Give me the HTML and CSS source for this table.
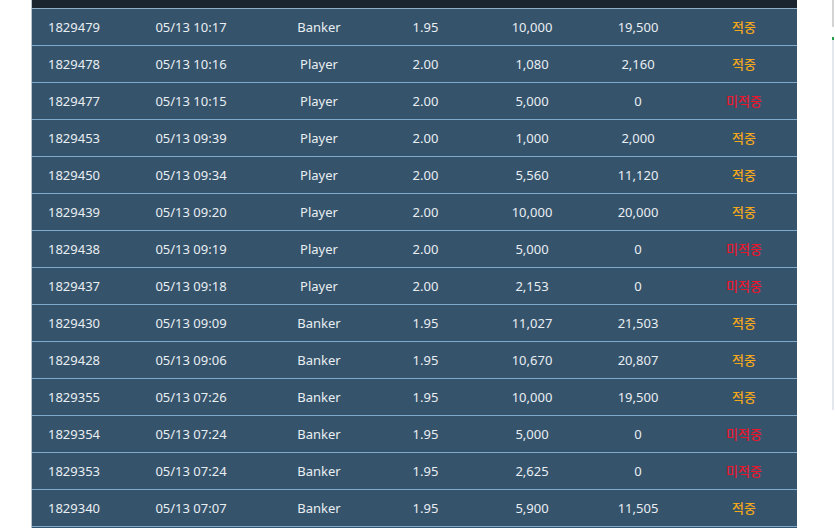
FILE: index.html
```html
<!DOCTYPE html>
<html lang="ko">
<head>
<meta charset="utf-8">
<title>Bet history</title>
<link rel="stylesheet" href="styles.css">
</head>
<body>
<div class="page">
  <div class="board">
    <div class="head"></div>
    <div class="row"><span>1829479</span><span>05/13 10:17</span><span>Banker</span><span>1.95</span><span>10,000</span><span>19,500</span><span class="win">적중</span></div>
    <div class="row"><span>1829478</span><span>05/13 10:16</span><span>Player</span><span>2.00</span><span>1,080</span><span>2,160</span><span class="win">적중</span></div>
    <div class="row"><span>1829477</span><span>05/13 10:15</span><span>Player</span><span>2.00</span><span>5,000</span><span>0</span><span class="lose">미적중</span></div>
    <div class="row"><span>1829453</span><span>05/13 09:39</span><span>Player</span><span>2.00</span><span>1,000</span><span>2,000</span><span class="win">적중</span></div>
    <div class="row"><span>1829450</span><span>05/13 09:34</span><span>Player</span><span>2.00</span><span>5,560</span><span>11,120</span><span class="win">적중</span></div>
    <div class="row"><span>1829439</span><span>05/13 09:20</span><span>Player</span><span>2.00</span><span>10,000</span><span>20,000</span><span class="win">적중</span></div>
    <div class="row"><span>1829438</span><span>05/13 09:19</span><span>Player</span><span>2.00</span><span>5,000</span><span>0</span><span class="lose">미적중</span></div>
    <div class="row"><span>1829437</span><span>05/13 09:18</span><span>Player</span><span>2.00</span><span>2,153</span><span>0</span><span class="lose">미적중</span></div>
    <div class="row"><span>1829430</span><span>05/13 09:09</span><span>Banker</span><span>1.95</span><span>11,027</span><span>21,503</span><span class="win">적중</span></div>
    <div class="row"><span>1829428</span><span>05/13 09:06</span><span>Banker</span><span>1.95</span><span>10,670</span><span>20,807</span><span class="win">적중</span></div>
    <div class="row"><span>1829355</span><span>05/13 07:26</span><span>Banker</span><span>1.95</span><span>10,000</span><span>19,500</span><span class="win">적중</span></div>
    <div class="row"><span>1829354</span><span>05/13 07:24</span><span>Banker</span><span>1.95</span><span>5,000</span><span>0</span><span class="lose">미적중</span></div>
    <div class="row"><span>1829353</span><span>05/13 07:24</span><span>Banker</span><span>1.95</span><span>2,625</span><span>0</span><span class="lose">미적중</span></div>
    <div class="row"><span>1829340</span><span>05/13 07:07</span><span>Banker</span><span>1.95</span><span>5,900</span><span>11,505</span><span class="win">적중</span></div>
  </div>
  <div class="edge edge-top"></div>
  <div class="edge edge-main"></div>
</div>
</body>
</html>
```

FILE: styles.css
```css
* { box-sizing: border-box; }
html, body {
  margin: 0;
  padding: 0;
  background: #ffffff;
  overflow: hidden;
  height: 528px;
}
.page {
  position: relative;
  width: 835px;
  height: 528px;
  padding-left: 31px;
  font-family: "Noto Sans", "Noto Sans CJK KR", sans-serif;
}
.board {
  width: 766px;
  border-left: 1px solid #b9c3cc;
  background: #35536b;
  padding-bottom: 4px;
}
.head {
  height: 9px;
  background: #1a2530;
  border-bottom: 1px solid #8fb0c8;
}
.row {
  display: grid;
  grid-template-columns: 84px 150px 106px 107px 106px 106px 106px;
  height: 37px;
  border-bottom: 1px solid #80aacb;
  align-items: center;
  font-size: 13px;
  color: #e9eef2;
}
.row span {
  text-align: center;
  line-height: 36px;
}
.row .win { color: #f2a71c; font-family: "Noto Sans CJK KR", sans-serif; font-weight: 500; }
.row .lose { color: #e8172e; font-family: "Noto Sans CJK KR", sans-serif; font-weight: 500; }
.edge {
  position: absolute;
  width: 2px;
}
.edge-top {
  left: 832px;
  top: 0;
  height: 27px;
  background: #d4d4d4;
}
.edge-main {
  left: 832px;
  top: 37px;
  height: 373px;
  background: #e4e8ee;
  border-top: 3px solid #22a04a;
}
```
